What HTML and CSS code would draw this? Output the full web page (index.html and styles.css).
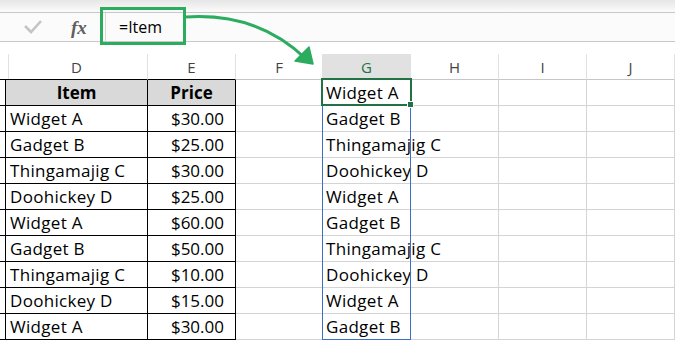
FILE: index.html
```html
<!DOCTYPE html>
<html lang="en">
<head>
  <meta charset="UTF-8" />
  <title>Spill formula =Item</title>
  <link rel="stylesheet" href="styles.css">
</head>
<body>
  <div class="window">
    <div class="ribbon-shadow"></div>

    <div class="formula-bar">
      <span class="check">
        <svg width="18" height="14" viewBox="0 0 18 14"><polyline points="1,6 7,12 17,1" fill="none" stroke="#c4c4c4" stroke-width="2.6"/></svg>
      </span>
      <span class="fx">fx</span>
      <div class="formula-input">=Item</div>
    </div>

    <div class="sheet">
      <!-- column letters -->
      <div class="cell col-head corner"></div>
      <div class="cell col-head boxed">D</div>
      <div class="cell col-head boxed">E</div>
      <div class="cell col-head">F</div>
      <div class="cell col-head active">G</div>
      <div class="cell col-head">H</div>
      <div class="cell col-head">I</div>
      <div class="cell col-head">J</div>

      <div class="cell row-num"></div>
      <div class="cell tbl th">Item</div>
      <div class="cell tbl th">Price</div>
      <div class="cell"></div>
      <div class="cell spill">Widget A</div>
      <div class="cell"></div><div class="cell"></div><div class="cell"></div>

      <div class="cell row-num"></div>
      <div class="cell tbl">Widget A</div>
      <div class="cell tbl num">$30.00</div>
      <div class="cell"></div>
      <div class="cell spill">Gadget B</div>
      <div class="cell"></div><div class="cell"></div><div class="cell"></div>

      <div class="cell row-num"></div>
      <div class="cell tbl">Gadget B</div>
      <div class="cell tbl num">$25.00</div>
      <div class="cell"></div>
      <div class="cell spill">Thingamajig C</div>
      <div class="cell"></div><div class="cell"></div><div class="cell"></div>

      <div class="cell row-num"></div>
      <div class="cell tbl">Thingamajig C</div>
      <div class="cell tbl num">$30.00</div>
      <div class="cell"></div>
      <div class="cell spill">Doohickey D</div>
      <div class="cell"></div><div class="cell"></div><div class="cell"></div>

      <div class="cell row-num"></div>
      <div class="cell tbl">Doohickey D</div>
      <div class="cell tbl num">$25.00</div>
      <div class="cell"></div>
      <div class="cell spill">Widget A</div>
      <div class="cell"></div><div class="cell"></div><div class="cell"></div>

      <div class="cell row-num"></div>
      <div class="cell tbl">Widget A</div>
      <div class="cell tbl num">$60.00</div>
      <div class="cell"></div>
      <div class="cell spill">Gadget B</div>
      <div class="cell"></div><div class="cell"></div><div class="cell"></div>

      <div class="cell row-num"></div>
      <div class="cell tbl">Gadget B</div>
      <div class="cell tbl num">$50.00</div>
      <div class="cell"></div>
      <div class="cell spill">Thingamajig C</div>
      <div class="cell"></div><div class="cell"></div><div class="cell"></div>

      <div class="cell row-num"></div>
      <div class="cell tbl">Thingamajig C</div>
      <div class="cell tbl num">$10.00</div>
      <div class="cell"></div>
      <div class="cell spill">Doohickey D</div>
      <div class="cell"></div><div class="cell"></div><div class="cell"></div>

      <div class="cell row-num"></div>
      <div class="cell tbl">Doohickey D</div>
      <div class="cell tbl num">$15.00</div>
      <div class="cell"></div>
      <div class="cell spill">Widget A</div>
      <div class="cell"></div><div class="cell"></div><div class="cell"></div>

      <div class="cell row-num"></div>
      <div class="cell tbl">Widget A</div>
      <div class="cell tbl num">$30.00</div>
      <div class="cell"></div>
      <div class="cell spill">Gadget B</div>
      <div class="cell"></div><div class="cell"></div><div class="cell"></div>

      <!-- selection overlays -->
      <div class="spill-range"></div>
      <div class="active-cell"><span class="fill-handle"></span></div>
    </div>

    <!-- callout: formula box and arrow -->
    <div class="callout-box"></div>
    <svg class="callout-arrow" width="675" height="340" viewBox="0 0 675 340">
      <path d="M186 17 C 232 14, 272 26, 306 59" fill="none" stroke="#2bac5e" stroke-width="3"/>
      <polygon points="295,61 313,64 309,47" fill="#2bac5e" stroke="#2bac5e" stroke-width="1.5" stroke-linejoin="round"/>
    </svg>
  </div>
</body>
</html>
```

FILE: styles.css
```css
:root {
  --grid: #d4d4d4;
  --head-line: #e1e1e1;
  --excel-green: #217346;
  --callout: #2bac5e;
  --spill: #3b6fc6;
}

body {
  margin: 0;
  background: #fff;
  font-family: 'Open Sans', 'Liberation Sans', sans-serif;
  color: #000;
}

.window {
  position: relative;
  width: 675px;
  height: 340px;
  overflow: hidden;
  display: flex;
  flex-direction: column;
}

.ribbon-shadow {
  height: 12px;
  background: linear-gradient(#e6e6e6, #fbfbfb);
}

.formula-bar {
  height: 30px;
  box-sizing: border-box;
  border-top: 1px solid #c8c8c8;
  border-bottom: 1px solid #c8c8c8;
  background: #fbfbfb;
  display: flex;
  align-items: center;
  margin-bottom: 12px;
}

.check {
  display: flex;
  margin-left: 24px;
  width: 18px;
}

.fx {
  margin-left: 29px;
  font-family: 'Liberation Serif', serif;
  font-style: italic;
  font-weight: bold;
  font-size: 19px;
  color: #5e5e5e;
  width: 34px;
  line-height: 1;
}

.formula-input {
  align-self: stretch;
  flex: 1;
  border-left: 1px solid #d8d8d8;
  padding-left: 13px;
  font-size: 16px;
  line-height: 28px;
  color: #000;
}

.sheet {
  position: relative;
  display: grid;
  grid-template-columns: 6px 142px 88px 87px 88px 88px 88px 88px;
  grid-auto-rows: 26px;
}

.cell {
  box-sizing: border-box;
  border-right: 1px solid var(--grid);
  border-bottom: 1px solid var(--grid);
  font-size: 17px;
  line-height: 26px;
  letter-spacing: 0.3px;
  padding: 0 4px;
  white-space: nowrap;
  overflow: visible;
}

.col-head {
  text-align: center;
  font-size: 15px;
  letter-spacing: 0;
  color: #444;
  border-right-color: var(--head-line);
  border-bottom-color: #c6c6c6;
}

.col-head.boxed,
.col-head.corner {
  border-bottom-color: #000;
}

.col-head.active {
  background: #e1e1e1;
  color: var(--excel-green);
}

.row-num {
  padding: 0;
  border-right-color: #000;
  border-bottom-color: #000;
}

.tbl {
  border-right-color: #000;
  border-bottom-color: #000;
  padding-left: 4px;
}

.th {
  background: #d9d9d9;
  font-weight: bold;
  letter-spacing: 0;
  text-align: center;
}

.num {
  text-align: right;
  letter-spacing: 0;
  padding-right: 11px;
}

.spill {
  padding-left: 3px;
}

.spill-range {
  position: absolute;
  left: 322px;
  top: 25px;
  width: 89px;
  height: 261px;
  box-sizing: border-box;
  border: 1px solid var(--spill);
}

.active-cell {
  position: absolute;
  left: 321px;
  top: 24px;
  width: 91px;
  height: 28px;
  box-sizing: border-box;
  border: 2px solid var(--excel-green);
}

.fill-handle {
  position: absolute;
  right: -4px;
  bottom: -4px;
  width: 5px;
  height: 5px;
  background: var(--excel-green);
  border: 1px solid #fff;
}

.callout-box {
  position: absolute;
  left: 100px;
  top: 7px;
  width: 86px;
  height: 38px;
  box-sizing: border-box;
  border: 3px solid var(--callout);
}

.callout-arrow {
  position: absolute;
  left: 0;
  top: 0;
  pointer-events: none;
}
```
